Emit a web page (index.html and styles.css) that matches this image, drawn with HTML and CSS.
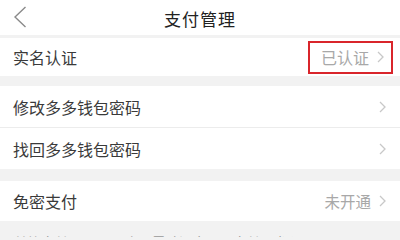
FILE: index.html
```html
<!DOCTYPE html>
<html lang="zh">
<head>
<meta charset="utf-8">
<link rel="stylesheet" href="styles.css">
</head>
<body>
<div class="page">
  <header class="nav">
    <svg class="back" width="14" height="22" viewBox="0 0 14 22"><path d="M12.5 1 L2 11 L12.5 21" fill="none" stroke="#8a8a8a" stroke-width="1.4"/></svg>
    <h1 class="title">支付管理</h1>
  </header>
  <div class="group g1">
    <div class="row">
      <span class="label">实名认证</span>
      <span class="value boxed">已认证<svg class="chev" width="7" height="12" viewBox="0 0 7 12"><path d="M1 1 L6 6 L1 11" fill="none" stroke="#c8c8c8" stroke-width="1.3"/></svg></span>
    </div>
  </div>
  <div class="group g2">
    <div class="row">
      <span class="label">修改多多钱包密码</span>
      <span class="value"><svg class="chev" width="7" height="12" viewBox="0 0 7 12"><path d="M1 1 L6 6 L1 11" fill="none" stroke="#c8c8c8" stroke-width="1.3"/></svg></span>
    </div>
    <div class="row divided">
      <span class="label">找回多多钱包密码</span>
      <span class="value"><svg class="chev" width="7" height="12" viewBox="0 0 7 12"><path d="M1 1 L6 6 L1 11" fill="none" stroke="#c8c8c8" stroke-width="1.3"/></svg></span>
    </div>
  </div>
  <div class="group g3">
    <div class="row">
      <span class="label">免密支付</span>
      <span class="value">未开通<svg class="chev" width="7" height="12" viewBox="0 0 7 12"><path d="M1 1 L6 6 L1 11" fill="none" stroke="#c8c8c8" stroke-width="1.3"/></svg></span>
    </div>
  </div>
  <p class="note">单笔支付1000元以内无需验证密码，支付更省心</p>
</div>
</body>
</html>
```
FILE: styles.css
```css
html, body {
  margin: 0;
  padding: 0;
  background: #f2f2f2;
}
body {
  font-family: "Noto Sans CJK SC", "Noto Sans", sans-serif;
  color: #333;
}
.page {
  width: 400px;
  height: 237px;
  overflow: hidden;
  background: #f2f2f2;
}
.nav {
  height: 35px;
  background: #fff;
  display: flex;
  align-items: center;
  justify-content: center;
  position: relative;
}
.back {
  position: absolute;
  left: 13px;
  top: 6px;
}
.title {
  margin: 0;
  font-size: 17px;
  font-weight: 400;
  color: #222;
  letter-spacing: 1px;
  padding-top: 1px;
}
.group {
  background: #fff;
}
.g1 { margin-top: 3px; }
.g2 { margin-top: 10px; }
.g3 { margin-top: 12px; }
.row {
  height: 38px;
  display: flex;
  align-items: center;
  justify-content: space-between;
  padding: 0 14px 0 13px;
}
.g2 .row { height: 41px; }
.g3 .row { height: 40px; }
.row.divided {
  border-top: 1px solid #ececec;
}
.label {
  font-size: 16px;
  color: #3a3a3a;
}
.value {
  display: flex;
  align-items: center;
  gap: 8px;
  font-size: 15.5px;
  color: #a8a8a8;
}
.boxed {
  outline: 2px solid #d9252b;
  outline-offset: 0;
  padding: 2px 7px 2px 11px;
  margin-right: -5px;
  height: 25px;
  font-size: 16px;
}
.note {
  margin: 11px 0 0 14px;
  font-size: 13.5px;
  color: #999;
}
```
